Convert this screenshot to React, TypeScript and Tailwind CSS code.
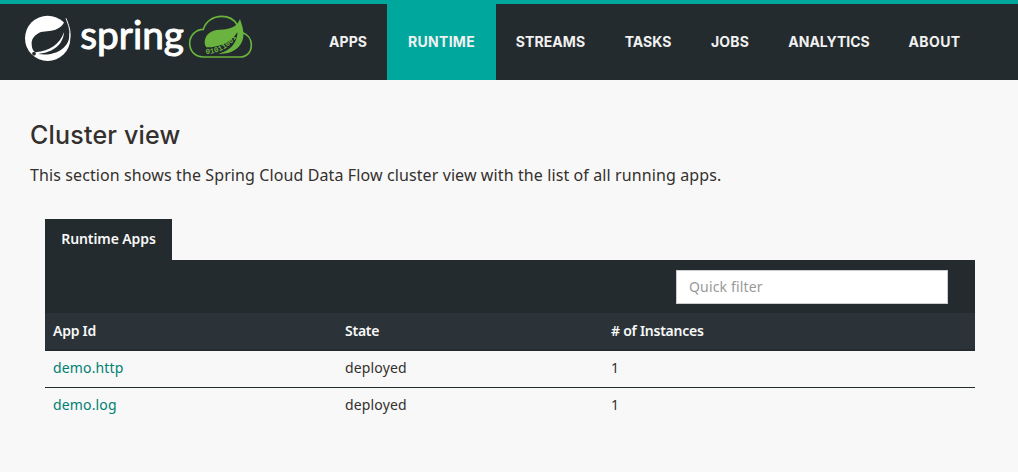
const nav = [
  { label: "APPS", box: "w-[78px]", track: "tracking-[0.1px]" },
  { label: "RUNTIME", box: "w-[109px] bg-[#00a79d]", track: "tracking-[0.3px]" },
  { label: "STREAMS", box: "w-[109px]", track: "tracking-[0.1px]" },
  { label: "TASKS", box: "w-[86px]", track: "tracking-[0px]" },
  { label: "JOBS", box: "w-[78px]", track: "tracking-[0.2px]" },
  { label: "ANALYTICS", box: "w-[120px]", track: "tracking-[0px]" },
  { label: "ABOUT", box: "w-[91px]", track: "tracking-[0.4px]" },
];

const apps = [
  { id: "demo.http", state: "deployed", instances: 1 },
  { id: "demo.log", state: "deployed", instances: 1 },
];

function Logo() {
  return (
    <svg className="block h-[76px] w-[240px] shrink-0" viewBox="60 12 720 228" role="img">
      <circle cx="143" cy="115" r="68" fill="#fff" />
      <path
        d="M198 55 C190 77 178 87 160 91 C144 95 125 93 113 101 C101 108 94 119 95 132 C95 144 99 153 106 157 C150 153 179 133 192 97 C190 132 161 158 114 162 C165 170 206 145 208 108 C208 88 204 72 198 55Z"
        fill="#242b2e"
      />
      <path d="M198 55 C206 76 212 91 210 113" fill="none" stroke="#fff" strokeWidth="3" />
      <circle cx="102" cy="161" r="5.5" fill="#242b2e" />
      <text
        x="241" y="146" textLength="311" lengthAdjust="spacingAndGlyphs"
        fill="#fff" stroke="#fff" strokeWidth="3" strokeLinejoin="round"
        className="font-['Lato',sans-serif] text-[113px]"
      >
        spring
      </text>
      <path
        d="M610 171 C586 171 569 154 569 130 C569 106 588 88 610 88 C617 64 639 49 665 49 C687 49 704 60 713 76 M727 98 C743 103 754 117 754 135 C754 156 741 171 720 171 H610"
        fill="none" stroke="#69b33e" strokeWidth="5"
      />
      <path
        d="M720 57 C710 82 690 88 660 89 C631 90 614 105 614 128 Q614 137 619 142 C650 143 692 130 712 99 C711 126 687 151 653 159 C691 163 726 145 730 110 C732 90 725 72 720 57Z"
        fill="#69b33e"
      />
      <path d="M712 97 C694 128 660 142 635 143 L645 162 C684 160 712 132 712 97Z" fill="#242b2e" />
      <path id="bits" d="M617 162 C650 161 687 149 713 106" fill="none" />
      <text fill="#69b33e" className="font-['Liberation_Mono',monospace] text-[23px] font-bold">
        <textPath href="#bits">01011001</textPath>
      </text>
      <path d="M655 161 C690 155 714 133 718 97 L726 97 C731 135 705 165 655 161Z" fill="#69b33e" />
    </svg>
  );
}

export default function App() {
  return (
    <div className="h-[472px] w-[1018px] overflow-hidden bg-[#f8f8f8] font-['Noto_Sans',sans-serif] text-sm text-[#34302d]">
      <header className="flex h-20 border-t-4 border-[#00a79d] bg-[#242b2e] pl-5">
        <Logo />
        <nav className="ml-[49px] flex">
          {nav.map((n) => (
            <a key={n.label} className={`flex items-center justify-center font-['Inter',sans-serif] text-sm font-bold text-[#f1f1f1] ${n.box}`}>
              <span className={n.track}>{n.label}</span>
            </a>
          ))}
        </nav>
      </header>
      <main className="pt-[38px] pl-[30px]">
        <h1 className="h-[34px] font-['Inter',sans-serif] text-[25px] leading-[34px] font-medium tracking-[0.2px]">Cluster view</h1>
        <p className="mt-[11px] h-6 text-base leading-6 tracking-[0.105px] whitespace-nowrap">
          This section shows the Spring Cloud Data Flow cluster view with the list of all running apps.
        </p>
        <section className="mt-8 ml-[15px] w-[930px]">
          <div className="flex h-[41px] w-[127px] items-center justify-center bg-[#242b2e] pb-0.5 font-semibold tracking-[-0.1px] text-[#f8f8f8]">
            Runtime Apps
          </div>
          <div className="flex h-[53px] justify-end bg-[#242b2e] pt-[10px] pr-[27px]">
            <input
              placeholder="Quick filter"
              className="h-[34px] w-[272px] border border-[#ccc] bg-white px-3 pb-0.5 text-sm tracking-[0.15px] placeholder:text-[#999]"
            />
          </div>
          <div className="grid h-[38px] grid-cols-[292px_266px_1fr] items-center border-b-2 border-[#242b2e] bg-[#2b3339] pb-px pl-2 font-semibold tracking-[-0.25px] text-[#f8f8f8]">
            <div>App Id</div>
            <div>State</div>
            <div># of Instances</div>
          </div>
          {apps.map((a) => (
            <div key={a.id} className="grid h-[37px] grid-cols-[292px_266px_1fr] items-center border-b border-[#242b2e] pb-0.5 pl-2 tracking-[0.15px] last:border-transparent">
              <a className="text-[#008073]">{a.id}</a>
              <div>{a.state}</div>
              <div>{a.instances}</div>
            </div>
          ))}
        </section>
      </main>
    </div>
  );
}
